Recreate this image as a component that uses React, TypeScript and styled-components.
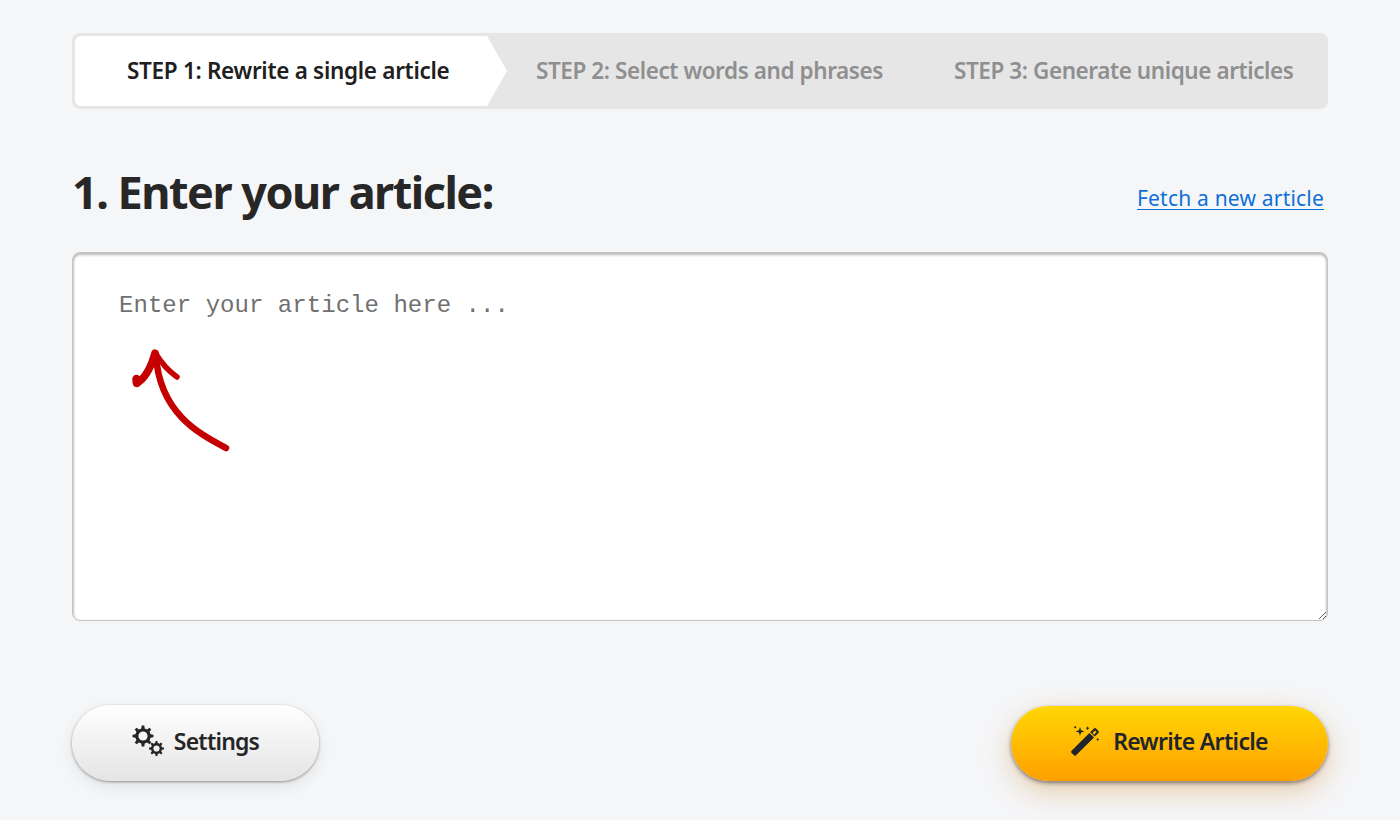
import React from "react";
import styled, { createGlobalStyle } from "styled-components";

const Global = createGlobalStyle`
  html, body { margin: 0; padding: 0; background: #f5f6f8; }
  body { font-family: "Noto Sans", sans-serif; color: #252525; }
  * { box-sizing: border-box; }
`;

const Page = styled.div`
  width: 1400px;
  height: 820px;
  padding: 33px 72px 0;
  overflow: hidden;
`;

const Steps = styled.ol`
  display: flex;
  align-items: stretch;
  height: 76px;
  margin: 0;
  padding: 3px;
  list-style: none;
  background: #e6e6e6;
  border-radius: 8px;
`;

const Step = styled.li<{ $active?: boolean; $width: number; $pad: number }>`
  display: flex;
  align-items: center;
  flex: 0 0 ${(p) => p.$width}px;
  padding-left: ${(p) => p.$pad}px;
  padding-bottom: 2px;
  font-family: "Noto Sans", sans-serif;
  font-size: 22.5px;
  font-weight: 600;
  letter-spacing: ${(p) => (p.$active ? "-0.3px" : "-0.42px")};
  white-space: nowrap;
  color: ${(p) => (p.$active ? "#202020" : "#8f8f8f")};
  background: ${(p) => (p.$active ? "#fff" : "transparent")};
  border-radius: ${(p) => (p.$active ? "6px 0 0 6px" : "0")};
  clip-path: ${(p) =>
    p.$active ? "polygon(0 0, 412px 0, 432px 50%, 412px 100%, 0 100%)" : "none"};
`;

const Header = styled.div`
  display: flex;
  align-items: center;
  justify-content: space-between;
  height: 70px;
  margin-top: 48px;
  padding-right: 4px;
`;

const Title = styled.h1`
  margin: 0;
  font-family: "Noto Sans", sans-serif;
  font-size: 45px;
  font-weight: 700;
  letter-spacing: -1.5px;
  line-height: 70px;
  color: #272727;
`;

const FetchLink = styled.a`
  margin-top: 11px;
  font-family: "Noto Sans", sans-serif;
  font-size: 21px;
  letter-spacing: 0.2px;
  color: #0f6fd8;
  text-decoration: underline;
  text-underline-offset: 3px;
  text-decoration-thickness: 1px;
`;

const EditorWrap = styled.div`
  position: relative;
  margin-top: 25px;
  height: 369px;
`;

const Editor = styled.textarea`
  display: block;
  width: 100%;
  height: 100%;
  min-height: 369px;
  padding: 38px 46px;
  font-family: "Liberation Mono", monospace;
  font-size: 24px;
  line-height: 30px;
  letter-spacing: 0.04px;
  color: #333;
  background: #fff;
  border: 1px solid #c4c4c4;
  border-radius: 8px;
  outline: none;
  resize: vertical;
  box-shadow: inset 0 2px 3px rgba(0, 0, 0, 0.28), inset 2px 0 2px -1px rgba(0, 0, 0, 0.12),
    inset -2px 0 2px -1px rgba(0, 0, 0, 0.12);
  &::placeholder {
    color: #707070;
    opacity: 1;
  }
`;

const Arrow = styled.svg`
  position: absolute;
  left: 54px;
  top: 90px;
  pointer-events: none;
`;

const Actions = styled.div`
  display: flex;
  align-items: center;
  justify-content: space-between;
  margin-top: 84px;
`;

const PillButton = styled.button<{ $primary?: boolean }>`
  display: flex;
  align-items: center;
  justify-content: center;
  gap: ${(p) => (p.$primary ? "12px" : "10px")};
  width: ${(p) => (p.$primary ? "317px" : "247px")};
  height: ${(p) => (p.$primary ? "75px" : "76px")};
  padding-bottom: 5px;
  font-family: "Noto Sans", sans-serif;
  font-size: 23px;
  font-weight: 600;
  letter-spacing: ${(p) => (p.$primary ? "-0.68px" : "-0.8px")};
  color: ${(p) => (p.$primary ? "#22242c" : "#252525")};
  border: none;
  border-radius: 39px;
  background: ${(p) =>
    p.$primary
      ? "linear-gradient(180deg, #ffd604 0%, #ffa000 100%)"
      : "linear-gradient(180deg, #ffffff 0%, #e4e4e4 100%)"};
  box-shadow: ${(p) =>
    p.$primary
      ? "0 2px 4px rgba(60, 50, 60, 0.6), 0 10px 28px rgba(200, 130, 30, 0.36)"
      : "0 1px 3px rgba(0, 0, 0, 0.4), 0 6px 16px rgba(0, 0, 0, 0.08)"};
`;

const gearPath = (cx: number, cy: number, r: number, teeth: number) => {
  const pts: string[] = [];
  const step = (Math.PI * 2) / teeth;
  for (let i = 0; i < teeth; i++) {
    const a = i * step - Math.PI / 2;
    const w = step * 0.2;
    const ri = r * 0.74;
    const p = [
      [a - w * 1.4, ri],
      [a - w * 0.8, r],
      [a + w * 0.8, r],
      [a + w * 1.4, ri],
    ];
    p.forEach(([t, rad]) =>
      pts.push(`${(cx + Math.cos(t) * rad).toFixed(2)} ${(cy + Math.sin(t) * rad).toFixed(2)}`)
    );
  }
  return `M${pts.join("L")}Z`;
};

const GearsIcon = () => (
  <svg width="32" height="32" viewBox="0 0 32 32" fill="none">
    <path d={gearPath(11, 11, 10.5, 8)} fill="#252525" />
    <circle cx="11" cy="11" r="4.6" fill="#f5f5f5" />
    <path d={gearPath(24.5, 23.5, 7.5, 8)} fill="#252525" />
    <circle cx="24.5" cy="23.5" r="3.1" fill="#eee" />
  </svg>
);

const WandIcon = () => (
  <svg width="30" height="30" viewBox="0 0 30 30" fill="none">
    <path d="M0.6 24.8 L18.4 7 L23 11.6 L5 29.2 Q4 30.2 3 29.2 L0.6 27 Q-0.4 26 0.6 24.8Z" fill="#22242c" />
    <path d="M19.2 6.2 L23 2.6 Q24 1.6 25 2.6 L27.4 5 Q28.4 6 27.4 7 L23.6 10.6Z" fill="#22242c" />
    <path d="M21.4 7 L24 4.4 L25.7 6 L23 8.8Z" fill="#ffc107" />
    <path d="M9 1 L10.1 4.3 L13.4 5.4 L10.1 6.5 L9 9.8 L7.9 6.5 L4.6 5.4 L7.9 4.3Z" fill="#22242c" />
    <path d="M16.6 0.2 L17.2 1.6 L18.6 2.2 L17.2 2.8 L16.6 4.2 L16 2.8 L14.6 2.2 L16 1.6Z" fill="#22242c" />
    <circle cx="4.2" cy="1.2" r="1" fill="#22242c" />
    <path d="M26.7 11.8 L27.2 13 L28.4 13.5 L27.2 14 L26.7 15.2 L26.2 14 L25 13.5 L26.2 13Z" fill="#22242c" />
  </svg>
);

export default function App() {
  return (
    <>
      <Global />
      <Page>
        <Steps>
          <Step $active $width={432} $pad={52}>STEP 1: Rewrite a single article</Step>
          <Step $width={418} $pad={29}>STEP 2: Select words and phrases</Step>
          <Step $width={400} $pad={29}>STEP 3: Generate unique articles</Step>
        </Steps>
        <Header>
          <Title>1. Enter your article:</Title>
          <FetchLink href="#">Fetch a new article</FetchLink>
        </Header>
        <EditorWrap>
          <Editor placeholder="Enter your article here ..." />
          <Arrow width="110" height="112" viewBox="0 0 110 112" fill="none">
            <path d="M100 106 C74 92 34 72 30 14" stroke="#c40000" strokeWidth="6.5" strokeLinecap="round" />
            <path d="M10.5 41 C18 38 25 26 29 11" stroke="#c40000" strokeWidth="7.5" strokeLinecap="round" />
            <path d="M30 12 C36 22 44 30 51 35" stroke="#c40000" strokeWidth="5.5" strokeLinecap="round" />
            <path d="M10.5 37 L11 41" stroke="#c40000" strokeWidth="8.5" strokeLinecap="round" />
          </Arrow>
        </EditorWrap>
        <Actions>
          <PillButton type="button"><GearsIcon />Settings</PillButton>
          <PillButton type="button" $primary><WandIcon />Rewrite Article</PillButton>
        </Actions>
      </Page>
    </>
  );
}
